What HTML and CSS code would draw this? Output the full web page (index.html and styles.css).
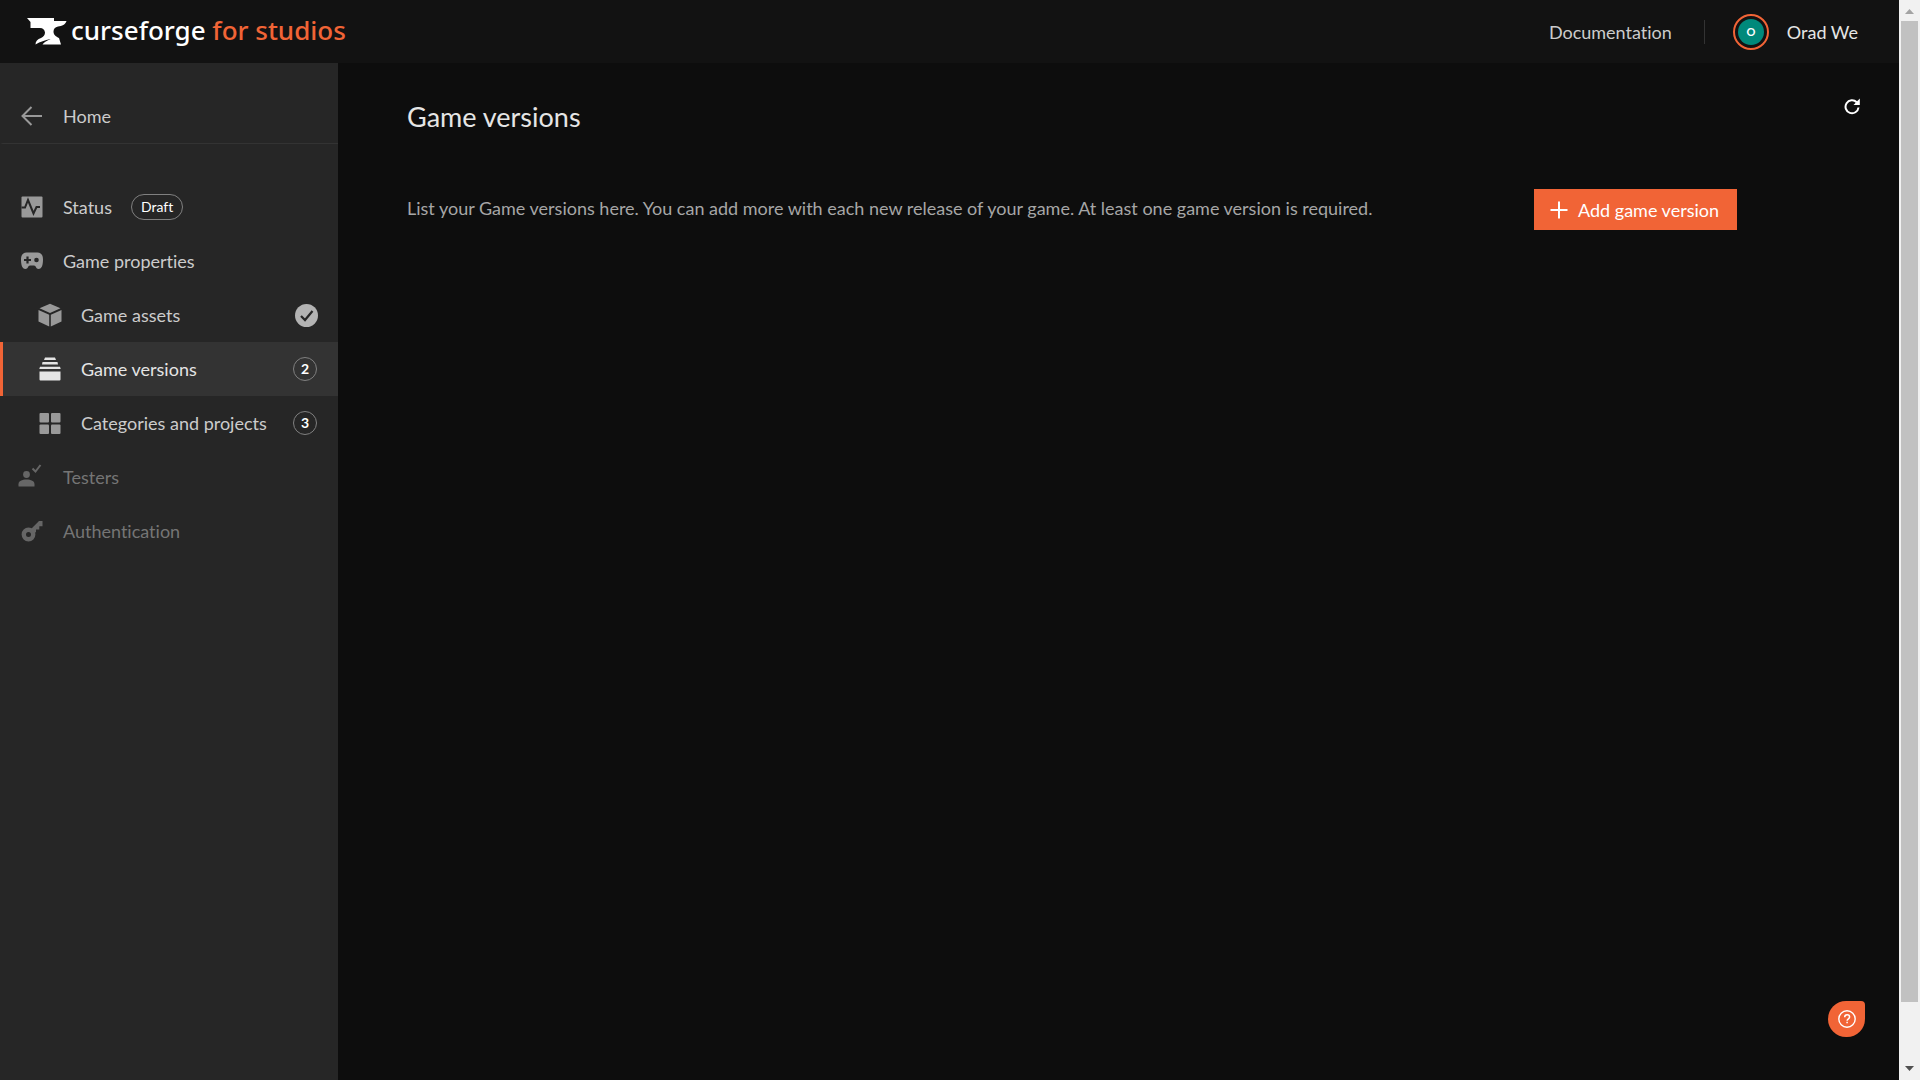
FILE: index.html
```
<!DOCTYPE html>
<html lang="en">
<head>
    <meta charset="UTF-8">
    <meta name="viewport" content="width=device-width, initial-scale=1.0">
    <title>Game versions - CurseForge for Studios</title>
    <link rel="stylesheet" href="styles.css">
</head>
<body>
    <div class="app">
        <header class="topbar">
            <a class="logo" href="#">
                <svg class="logo-mark" viewBox="0 0 40 27">
                    <path fill="#fff" d="M0 0h27v3h12.500c-1 3.500-4.500 5-8.500 5.500-3 .6-4.500 2.500-4.500 5 0 3.500 2.500 5 5.500 6.500l2 6.500H15.500c1.500-2 3.500-3.500 8-5.500-6 1.500-10 2.500-15 5.500 0-3 2-5.500 5.500-6.500 2.500-1 4-3 4-5.500-.5-3-2-4.500-5-4.500H3.500V4z"/>
                </svg>
                <span class="logo-text">curseforge <span class="logo-accent">for studios</span></span>
            </a>
            <nav class="topbar-nav">
                <a class="doc-link" href="#">Documentation</a>
                <button class="user" type="button">
                    <span class="avatar"><span class="avatar-inner">O</span></span>
                    <span>Orad We</span>
                </button>
            </nav>
        </header>

        <div class="layout">
            <aside class="sidebar">
                <a class="nav-home" href="#">
                    <svg class="icon" viewBox="0 0 24 24">
                        <path d="M11.500 3L2.500 12l9 9M3 12h19" fill="none" stroke="currentColor" stroke-width="2"/>
                    </svg>
                    <span>Home</span>
                </a>
                <nav class="nav-list">
                    <a class="nav-item" href="#">
                        <svg class="icon" viewBox="0 0 24 24">
                            <rect x="1.500" y="1.500" width="21" height="21" rx="1" fill="currentColor"/>
                            <path d="M1.500 12.500h3.500l3-7.500 5.500 13.500 3-6.500h3.500" fill="none" stroke="#262626" stroke-width="2"/>
                        </svg>
                        <span>Status</span>
                        <span class="tag">Draft</span>
                    </a>
                    <a class="nav-item" href="#">
                        <svg class="icon" viewBox="0 0 24 24">
                            <path fill="currentColor" d="M6.500 3.500h11c3.500 0 5.500 2.500 5.500 7 0 5-1 9.500-4.500 9.500-2.500 0-2.500-3.500-4.500-3.500h-4C8 16.500 8 20 5.500 20 2 20 1 15.500 1 10.500c0-4.500 2-7 5.500-7z"/>
                            <path d="M7.500 7.500v7M4 11h7" stroke="#262626" stroke-width="2.200"/>
                            <circle cx="16.500" cy="11" r="2.300" fill="#262626"/>
                        </svg>
                        <span>Game properties</span>
                    </a>
                    <a class="nav-item nav-sub" href="#">
                        <svg class="icon" viewBox="0 0 24 24">
                            <path fill="currentColor" d="M12 .8L22.500 5.300 12 10 1.500 5.300zM.5 7l10.700 4.700V23.500L.5 18.500zM23.500 7l-10.700 4.700V23.500l10.700-5z"/>
                        </svg>
                        <span>Game assets</span>
                        <svg class="done" viewBox="0 0 24 24">
                            <circle cx="12.500" cy="12.500" r="11.500" fill="currentColor"/>
                            <path d="M7 13l4 4 7.500-9" fill="none" stroke="#262626" stroke-width="2.200"/>
                        </svg>
                    </a>
                    <a class="nav-item nav-sub active" href="#">
                        <svg class="icon" viewBox="0 0 24 24">
                            <path fill="currentColor" d="M7 .5h10l1 2.500H6zM4.500 5h15l.5 2.500H4zM2 9.700h20l.7 2.300H1.300zM1.500 14.500h21v8a1 1 0 0 1-1 1h-19a1 1 0 0 1-1-1z"/>
                        </svg>
                        <span>Game versions</span>
                        <span class="count">2</span>
                    </a>
                    <a class="nav-item nav-sub" href="#">
                        <svg class="icon" viewBox="0 0 24 24" fill="currentColor">
                            <rect x="1.500" y="2" width="9.500" height="9.500" rx="1"/>
                            <rect x="13" y="2" width="9.500" height="9.500" rx="1"/>
                            <rect x="1.500" y="13.500" width="9.500" height="9.500" rx="1"/>
                            <rect x="13" y="13.500" width="9.500" height="9.500" rx="1"/>
                        </svg>
                        <span>Categories and projects</span>
                        <span class="count">3</span>
                    </a>
                    <a class="nav-item disabled" href="#" aria-disabled="true">
                        <svg class="icon" viewBox="2 1 24 24" overflow="visible">
                            <circle cx="8.500" cy="10.500" r="3.400" fill="currentColor"/>
                            <path fill="currentColor" d="M.5 22.500v-2.300C.5 17 4 15.500 8.500 15.500s8 1.500 8 4.700v2.300z"/>
                            <path d="M14.500 4.500l3 3 5-6.500" fill="none" stroke="currentColor" stroke-width="2"/>
                        </svg>
                        <span>Testers</span>
                    </a>
                    <a class="nav-item disabled" href="#" aria-disabled="true">
                        <svg class="icon" viewBox="0 0 24 24">
                            <circle cx="8.500" cy="15.500" r="4.700" fill="none" stroke="currentColor" stroke-width="4.400"/>
                            <path fill="currentColor" d="M10.500 10.500L19 2h3.500v5.200H19.300v3.300h-3.300v2.500L13 15z"/>
                        </svg>
                        <span>Authentication</span>
                    </a>
                </nav>
            </aside>

            <main class="content">
                <div class="page-head">
                    <h1>Game versions</h1>
                    <button class="refresh" type="button" aria-label="Refresh">
                        <svg viewBox="0 0 16 16">
                            <path d="M12.700 4.200A6.500 6.500 0 1 0 14.500 9.500" fill="none" stroke="#fff" stroke-width="2"/>
                            <path d="M15.800 .5v6.500H9.500z" fill="#fff"/>
                        </svg>
                    </button>
                </div>
                <div class="intro">
                    <p>List your Game versions here. You can add more with each new release of your game. At least one game version is required.</p>
                    <button class="btn-add" type="button">
                        <svg viewBox="0 0 18 18"><path d="M9 .5v17M.5 9h17" stroke="#fff" stroke-width="2"/></svg>
                        <span>Add game version</span>
                    </button>
                </div>
            </main>
        </div>
    </div>

    <div class="scrollbar" aria-hidden="true">
        <svg class="scroll-arrow" viewBox="0 0 21 21"><path d="M6 14l4.500-5 4.500 5z" fill="#a3a3a3"/></svg>
        <div class="scroll-track"><div class="scroll-thumb"></div></div>
        <svg class="scroll-arrow" viewBox="0 0 21 21"><path d="M6 7l4.500 5L15 7z" fill="#505050"/></svg>
    </div>

    <button class="help" type="button" aria-label="Help">
        <svg viewBox="0 0 18 18" fill="none" stroke="#fff">
            <circle cx="9" cy="9" r="8.200" stroke-width="1.400"/>
            <path d="M6.700 7.200c0-3.200 4.900-3 4.900-.2 0 1.800-2.500 1.800-2.500 3.700M9.100 11.800v1.500" stroke-width="1.500"/>
        </svg>
    </button>
</body>
</html>
```
FILE: styles.css
```
* {
    box-sizing: border-box;
}

body {
    margin: 0;
    display: flex;
    min-height: 100vh;
    background: #0d0d0d;
    color: #e5e5e5;
    font-family: Lato, "Open Sans", sans-serif;
    font-size: 18px;
    font-variant-ligatures: none;
    line-height: 24px;
}

a {
    color: inherit;
    text-decoration: none;
}

button {
    font: inherit;
    color: inherit;
    background: none;
    border: none;
    padding: 0;
    cursor: pointer;
}

svg {
    display: block;
    flex-shrink: 0;
}

.app {
    flex: 1;
    display: flex;
    flex-direction: column;
    min-width: 0;
}

/* Top bar */
.topbar {
    display: flex;
    align-items: center;
    justify-content: space-between;
    height: 63px;
    padding: 0 41px 0 27px;
    background: #121212;
}

.logo {
    display: flex;
    align-items: center;
    gap: 4px;
}

.logo-mark {
    width: 40px;
    height: 27px;
}

.logo-text {
    padding-bottom: 3px;
    color: #fff;
    font-family: "Noto Sans", Lato, sans-serif;
    font-size: 26px;
    font-weight: 500;
    line-height: 32px;
}

.logo-accent {
    color: #f16436;
}

.topbar-nav {
    display: flex;
    align-items: center;
}

.doc-link {
    padding-right: 32px;
    border-right: 1px solid #333;
    color: #ccc;
}

.user {
    display: flex;
    align-items: center;
    gap: 18px;
    margin-left: 28px;
}

.avatar {
    padding: 3px;
    border: 2px solid #f16436;
    border-radius: 50%;
}

.avatar-inner {
    display: flex;
    align-items: center;
    justify-content: center;
    width: 26px;
    height: 26px;
    border-radius: 50%;
    background: #00897b;
    color: #fff;
    font-size: 11px;
    font-weight: 700;
}

/* Sidebar */
.layout {
    flex: 1;
    display: flex;
}

.sidebar {
    width: 338px;
    flex-shrink: 0;
    padding-top: 27px;
    background: #262626;
}

.nav-home,
.nav-item {
    display: flex;
    align-items: center;
    gap: 19px;
    height: 54px;
    padding: 0 20px 0 17px;
    border-left: 3px solid transparent;
    color: #ccc;
}

.nav-home {
    padding-bottom: 1px;
    border-bottom: 1px solid #333;
    border-left-color: #262626;
}

.nav-list {
    padding-top: 36px;
}

.nav-sub {
    padding-left: 35px;
}

.nav-item.active {
    border-left-color: #f16436;
    background: #333;
    color: #e5e5e5;
}

.nav-item.disabled {
    color: #757575;
}

.icon {
    width: 24px;
    height: 24px;
    color: #999;
}

.active .icon {
    color: #e5e5e5;
}

.disabled .icon {
    color: #666;
}

.tag {
    padding: 0 9px;
    border: 1px solid #808080;
    border-radius: 14px;
    color: #fff;
    font-size: 14px;
}

.count {
    width: 24px;
    height: 24px;
    margin: 0 1px 0 auto;
    border: 1px solid #808080;
    border-radius: 50%;
    color: #fff;
    font-size: 14px;
    font-weight: 700;
    line-height: 22px;
    text-align: center;
}

.done {
    width: 24px;
    height: 24px;
    margin-left: auto;
    color: #b3b3b3;
}

/* Content */
.content {
    flex: 1;
    padding: 34px 162px 0 69px;
}

.page-head {
    display: flex;
    justify-content: space-between;
    margin-right: -123px;
}

h1 {
    margin: 0;
    font-size: 27px;
    font-weight: 400;
    line-height: 40px;
}

.refresh {
    align-self: flex-start;
}

.refresh svg {
    width: 16px;
    height: 18px;
}

.intro {
    display: flex;
    align-items: flex-start;
    justify-content: space-between;
    margin-top: 52px;
}

.intro p {
    margin: 0;
    color: #a6a6a6;
    line-height: 38px;
}

.btn-add {
    display: flex;
    align-items: center;
    gap: 10px;
    height: 41px;
    padding: 0 18px 0 16px;
    background: #f16436;
    color: #fff;
}

.btn-add svg {
    width: 18px;
    height: 18px;
}

.help {
    position: fixed;
    right: 55px;
    bottom: 43px;
    display: flex;
    align-items: center;
    justify-content: center;
    width: 37px;
    height: 36px;
    border-radius: 18px 4px 18px 18px;
    background: #f16436;
}

.help svg {
    width: 18px;
    height: 18px;
}

/* Page scrollbar */
.scrollbar {
    display: flex;
    flex-direction: column;
    width: 21px;
    background: #f1f1f1;
}

.scroll-arrow {
    width: 21px;
    height: 21px;
}

.scroll-track {
    flex: 1;
    padding: 0 2px;
}

.scroll-thumb {
    height: 94.5%;
    background: #c1c1c1;
}
```
